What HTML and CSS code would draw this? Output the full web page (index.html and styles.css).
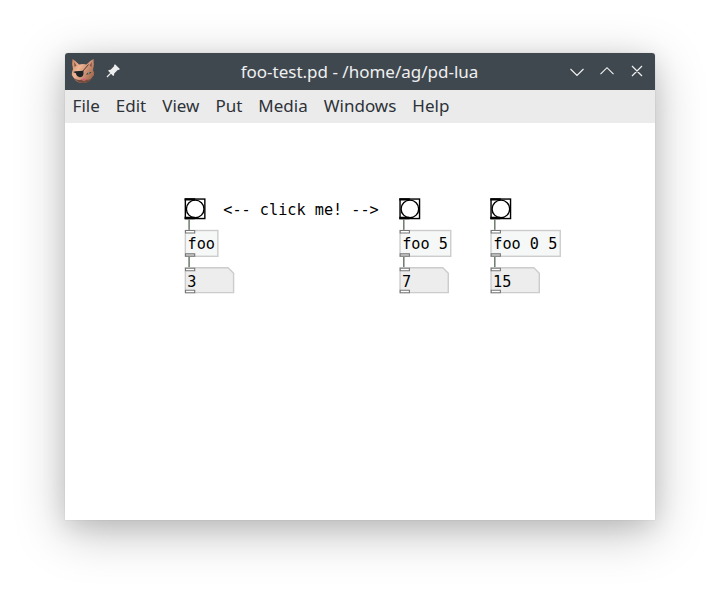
FILE: index.html
```html
<!DOCTYPE html>
<html lang="en">
<head>
<meta charset="utf-8">
<title>foo-test.pd</title>
<link rel="stylesheet" href="styles.css">
</head>
<body>
<main class="window">
  <header class="titlebar">
    <svg class="app-icon" width="24" height="26" viewBox="0 0 24 26">
      <defs>
        <linearGradient id="fur" x1="0" y1="0" x2="1" y2=".6">
          <stop offset="0" stop-color="#c98361"/>
          <stop offset=".4" stop-color="#efb694"/>
          <stop offset="1" stop-color="#a66a50"/>
        </linearGradient>
      </defs>
      <path d="M1.5 1 Q5 3 8 6.5 Q12 5.5 15.5 6.5 Q19 2.5 22.5 1 Q23.5 7 22 12 Q23.5 15 23 17 L20 21 Q17 25 12 25 Q6 25 3.5 21 L.8 17 Q.7 14 2 11 Q.5 6 1.5 1Z" fill="url(#fur)"/>
      <path d="M3 20 Q6 25 12 25 Q17 25 20.5 20.5 Q17 22.5 15.5 21.5 Q13 24 10.5 21.5 Q7 23 3 20Z" fill="#754b3e"/>
      <path d="M3 4 L5.5 7.5 L3.5 9Z M21 4 L18.5 7.5 L20.5 9Z" fill="#8b5546"/>
      <path d="M11.5 13.5 L17.5 6.5" stroke="#4b332e" stroke-width=".9"/>
      <path d="M2 14 L4.5 13.2 L12.5 12.8 Q13 19.3 9 19.3 Q5.5 18.5 4.8 15.2Z" fill="#202529"/>
      <path d="M15 16.5 Q16.5 13.5 20.5 14 Q19 17 15 16.5Z" fill="#4d4038"/>
      <circle cx="17.8" cy="15.1" r=".8" fill="#8eb2a6"/>
      <path d="M10.5 21.2 Q13 20 15.5 21.2 Q13 24 10.5 21.2Z" fill="#d65b7c"/>
    </svg>
    <svg class="pin" width="16" height="16" viewBox="0 0 16 16">
      <path d="M10 1.2 L14.9 6.1 L13.8 7.1 L12.9 6.7 L9.2 10.4 L9.1 12.2 L8.2 12.9 L3.1 7.8 L3.9 6.9 L5.6 6.8 L9.3 3.1 L8.9 2.2Z" fill="#edefee"/>
      <path d="M5.8 10.2 L2 14" stroke="#edefee" stroke-width="1.2"/>
    </svg>
    <h1 class="title">foo-test.pd - /home/ag/pd-lua</h1>
    <svg class="controls" width="80" height="16" viewBox="0 0 80 16">
      <path d="M5.5 5 L12 11.5 L18.5 5 M35.5 10.2 L42 3.7 L48.5 10.2 M67 2 L77 12 M77 2 L67 12"/>
    </svg>
  </header>
  <nav class="menubar">
    <span>File</span><span>Edit</span><span>View</span><span>Put</span><span>Media</span><span>Windows</span><span>Help</span>
  </nav>
  <svg class="canvas" width="590" height="397" viewBox="65 123 590 397">
    <defs>
      <g id="bang">
        <rect class="bang-box" x=".75" y=".75" width="19.5" height="19.5"/>
        <circle class="bang-ring" cx="10.6" cy="10.6" r="8.8"/>
        <path d="M0 0h10.5v2.3H0z M0 18.5h10v2.5H0z"/>
      </g>
      <path id="wires" class="wire" d="M4.5 21V32M4.5 58V70"/>
      <path id="number" class="number" d="M.75 69.5H43.5L49 75V94.3H.75Z"/>
      <g id="ports" class="port">
        <path d="M.9 32.2h9.2v2.5H.9z M.9 69.9h9.2v2.5H.9z M.9 91.9h9.2v2.5H.9z"/>
        <path class="outlet" d="M.9 55.4h9.2v2.5H.9z"/>
      </g>
    </defs>
    <g transform="translate(184.6 198.3)">
      <use href="#bang"/><use href="#wires"/>
      <rect class="object" x=".75" y="32.2" width="32.5" height="25.8"/>
      <use href="#number"/><use href="#ports"/>
    </g>
    <g transform="translate(399.3 198.3)">
      <use href="#bang"/><use href="#wires"/>
      <rect class="object" x=".75" y="32.2" width="50.7" height="25.8"/>
      <use href="#number"/><use href="#ports"/>
    </g>
    <g transform="translate(490.3 198.3)">
      <use href="#bang"/><use href="#wires"/>
      <rect class="object" x=".75" y="32.2" width="69.2" height="25.8"/>
      <use href="#number"/><use href="#ports"/>
    </g>
    <g class="labels">
      <text x="223.3" y="215">&lt;-- click me! --&gt;</text>
      <text x="187.5" y="249">foo</text>
      <text x="187.3" y="287">3</text>
      <text x="402.2" y="249">foo 5</text>
      <text x="402" y="287">7</text>
      <text x="493.3" y="249">foo 0 5</text>
      <text x="493" y="287">15</text>
    </g>
  </svg>
</main>
</body>
</html>
```

FILE: styles.css
```css
* {
  box-sizing: border-box;
}

body {
  margin: 0;
  height: 597px;
  padding: 53px 65px 77px;
  background: #fff;
  overflow: hidden;
  font-family: "Noto Sans", sans-serif;
}

.window {
  width: 590px;
  height: 467px;
  border-radius: 3px 3px 0 0;
  overflow: hidden;
  background: #fff;
  box-shadow: 0 0 1px rgba(0, 0, 0, .25), 0 12px 50px rgba(0, 0, 0, .25), 0 6px 24px rgba(0, 0, 0, .1);
}

.titlebar {
  display: grid;
  grid-template-columns: 24px 26px 1fr 80px;
  align-items: center;
  height: 37px;
  padding: 0 10px 0 6px;
  background: #40484f;
  color: #eff0f1;
}

.app-icon {
  margin-top: -1px;
}

.pin {
  margin: -1px 0 0 10px;
}

.title {
  margin: 0 0 0 33px;
  text-align: center;
  font-size: 17px;
  font-weight: 400;
  line-height: 37px;
  white-space: nowrap;
}

.controls {
  fill: none;
  stroke: #f0f1f1;
  stroke-width: 1.15;
}

.menubar {
  display: flex;
  gap: 16px;
  height: 33px;
  padding-left: 7.6px;
  background: #ebebeb;
  color: #2d3238;
  font-size: 17px;
  line-height: 32px;
}

.canvas {
  display: block;
}

.bang-box,
.bang-ring {
  fill: #fff;
  stroke: #000;
  stroke-width: 1.4;
}

.wire {
  fill: none;
  stroke: #6d7b6d;
  stroke-width: 1.5;
}

.object {
  fill: #f6f8f7;
  stroke: #ccc;
  stroke-width: 1.4;
}

.number {
  fill: #ededed;
  stroke: #ccc;
  stroke-width: 1.4;
}

.port {
  fill: #fff;
  stroke: #777;
  stroke-width: 1.1;
}

.port .outlet {
  fill: #ccc;
}

.labels {
  font-family: "DejaVu Sans Mono", monospace;
  font-size: 15.2px;
  fill: #000;
  white-space: pre;
}
```
